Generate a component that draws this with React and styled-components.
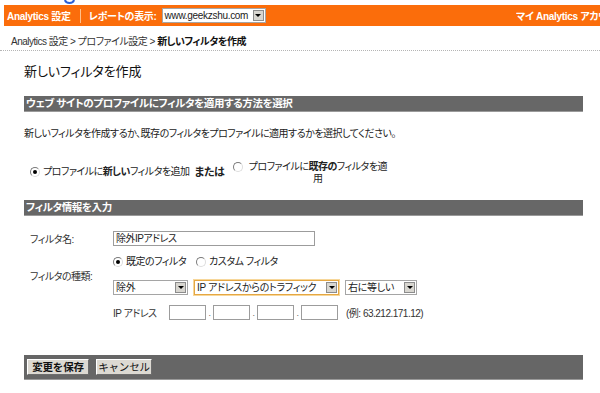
import React from 'react'
import styled, { createGlobalStyle } from 'styled-components'

const GlobalStyle = createGlobalStyle`
  html, body {
    margin: 0;
    padding: 0;
    background: #fff;
  }
  body {
    font-family: "Liberation Sans", "Noto Sans CJK JP", sans-serif;
    font-size: 10px;
    letter-spacing: -0.5px;
    color: #222;
    font-feature-settings: "palt";
  }
`

const Page = styled.div`
  width: 600px;
  height: 393px;
  overflow: hidden;
`

const LogoStrip = styled.div`
  height: 5px;
  padding-left: 63px;
  overflow: hidden;
  svg { display: block; }
`

const TopBar = styled.div`
  height: 21px;
  margin-left: 4px;
  background: #fb6d0b;
  display: flex;
  align-items: center;
  padding-left: 3px;
  overflow: hidden;
  color: #fff;
  font-weight: bold;
  font-size: 10px;
  letter-spacing: -0.3px;
  white-space: nowrap;
`

const Sep = styled.span`
  width: 1px;
  height: 14px;
  background: #ffc08c;
  margin: 0 8px 0 9px;
`

const RightLink = styled.span`
  margin-left: auto;
  width: 84px;
  overflow: hidden;
  white-space: nowrap;
`

const Select = styled.div`
  display: flex;
  align-items: center;
  height: 15px;
  width: ${p => p.$w}px;
  box-sizing: border-box;
  background: #fff;
  border: 1px solid ${p => (p.$focus ? '#e5a743' : '#a5a5a5')};
  box-shadow: ${p => (p.$focus ? '0 0 0 1px #f7d79a' : 'none')};
  margin-left: ${p => p.$ml || 0}px;
  color: #222;
  font-weight: normal;
  font-size: 10px;
  letter-spacing: -0.3px;
  flex-shrink: 0;
`

const SelectText = styled.span`
  flex: 1;
  padding-left: 2px;
  line-height: 13px;
  overflow: hidden;
  white-space: nowrap;
`

const Arrow = styled.span`
  width: 11px;
  height: 11px;
  margin-right: 1px;
  background: #d8d6d0;
  border: 1px solid #8c8c8c;
  box-sizing: border-box;
  display: flex;
  align-items: center;
  justify-content: center;
  flex-shrink: 0;
  &::after {
    content: '';
    border-left: 3px solid transparent;
    border-right: 3px solid transparent;
    border-top: 3px solid #000;
  }
`

const Crumbs = styled.div`
  height: 25px;
  box-sizing: border-box;
  padding: 10px 0 0 11px;
  line-height: 12px;
  color: #333;
  border-bottom: 1px dotted #b5b5b5;
  b { color: #111; }
`

const Content = styled.div`
  padding: 0 17px 0 24px;
`

const Title = styled.h1`
  margin: 13px 0 0;
  font-size: 13px;
  letter-spacing: -0.1px;
  line-height: 16px;
  font-weight: normal;
  color: #111;
`

const SectionBar = styled.div`
  margin-top: ${p => p.$mt}px;
  height: 16px;
  background: #676767;
  border-bottom: 1px solid #9a9a9a;
  box-sizing: border-box;
  color: #fff;
  font-weight: bold;
  font-size: 10.5px;
  letter-spacing: -0.4px;
  line-height: 15px;
  padding-left: 2px;
`

const Para = styled.p`
  margin: 16px 0 0;
  line-height: 12px;
`

const ChoiceRow = styled.div`
  margin-top: 26px;
  display: flex;
  align-items: flex-start;
  padding-left: 6px;
  line-height: 12px;
`

const Option = styled.label`
  display: flex;
  align-items: flex-start;
  gap: 3px;
  line-height: 12px;
  margin-top: ${p => p.$mt || 0}px;
  b { font-weight: bold; }
`

const WrapText = styled.span`
  width: ${p => p.$w}px;
  text-align: center;
`

const Or = styled.span`
  font-weight: bold;
  font-size: 11px;
  margin: 0 9px 0 5px;
`

const Radio = styled.span`
  width: 10px;
  height: 10px;
  margin-top: 1px;
  flex-shrink: 0;
  border-radius: 50%;
  box-sizing: border-box;
  border: 1px solid #7a7a7a;
  border-right-color: #ddd;
  border-bottom-color: #ddd;
  background: #fff;
  display: flex;
  align-items: center;
  justify-content: center;
  &::after {
    content: '';
    width: 4px;
    height: 4px;
    border-radius: 50%;
    background: ${p => (p.$on ? '#000' : 'transparent')};
  }
`

const Form = styled.div`
  margin-top: 15px;
  display: grid;
  grid-template-columns: 83px 1fr;
  padding-left: 6px;
  row-gap: 10px;
`

const Label = styled.div`
  display: flex;
  align-items: center;
  color: #333;
`

const Controls = styled.div`
  display: flex;
  flex-direction: column;
  gap: ${p => p.$gap || 0}px;
`

const Row = styled.div`
  display: flex;
  align-items: center;
  gap: ${p => p.$gap || 0}px;
`

const TextInput = styled.div`
  width: ${p => p.$w}px;
  height: 15px;
  box-sizing: border-box;
  border: 1px solid #9c9c9c;
  padding-left: 2px;
  line-height: 13px;
  background: #fff;
`

const IpLabel = styled.span`
  width: 56px;
  color: #333;
`

const Dot = styled.span`
  width: 7px;
  text-align: center;
  font-size: 9px;
  color: #666;
`

const Hint = styled.span`
  margin-left: 8px;
  color: #333;
`

const ButtonBar = styled.div`
  margin-top: 35px;
  height: 25px;
  background: #666;
  border-bottom: 1px solid #9a9a9a;
  box-sizing: border-box;
  display: flex;
  align-items: center;
  padding-left: 3px;
  gap: 7px;
`

const Button = styled.button`
  height: 16px;
  width: ${p => p.$w}px;
  padding: 0;
  font-family: inherit;
  font-size: 10.5px;
  letter-spacing: -0.2px;
  white-space: nowrap;
  font-weight: ${p => (p.$primary ? 'bold' : 'normal')};
  color: #111;
  background: #dcd9d2;
  border: 1px solid;
  border-color: #fff #6d6d6d #6d6d6d #fff;
  line-height: 14px;
`

export default function App() {
  return (
    <Page>
      <GlobalStyle />
      <LogoStrip>
        <svg width="14" height="5" viewBox="0 0 14 5">
          <path d="M2 0 C3 4 10 4 11 0" stroke="#2a5fd6" strokeWidth="2" fill="none" />
        </svg>
      </LogoStrip>
      <TopBar>
        <span>Analytics 設定</span>
        <Sep />
        <span>レポートの表示:</span>
        <Select $w={104} $ml={5}>
          <SelectText>www.geekzshu.com</SelectText>
          <Arrow />
        </Select>
        <RightLink>マイ Analytics アカウント</RightLink>
      </TopBar>
      <Crumbs>
        Analytics 設定 &gt; プロファイル設定 &gt; <b>新しいフィルタを作成</b>
      </Crumbs>
      <Content>
        <Title>新しいフィルタを作成</Title>
        <SectionBar $mt={16}>ウェブ サイトのプロファイルにフィルタを適用する方法を選択</SectionBar>
        <Para>新しいフィルタを作成するか、既存のフィルタをプロファイルに適用するかを選択してください。</Para>
        <ChoiceRow>
          <Option>
            <Radio $on />
            <span>プロファイルに<b>新しい</b>フィルタを追加</span>
          </Option>
          <Or>または</Or>
          <Option $mt={-5}>
            <Radio />
            <WrapText $w={143}>プロファイルに<b>既存の</b>フィルタを適用</WrapText>
          </Option>
        </ChoiceRow>
        <SectionBar $mt={15}>フィルタ情報を入力</SectionBar>
        <Form>
          <Label>フィルタ名:</Label>
          <TextInput $w={202}>除外IPアドレス</TextInput>
          <Label>フィルタの種類:</Label>
          <Controls $gap={12}>
            <Row $gap={10}>
              <Option>
                <Radio $on />
                <span>既定のフィルタ</span>
              </Option>
              <Option>
                <Radio />
                <span>カスタム フィルタ</span>
              </Option>
            </Row>
            <Row $gap={6}>
              <Select $w={75}>
                <SelectText>除外</SelectText>
                <Arrow />
              </Select>
              <Select $w={145} $focus>
                <SelectText>IP アドレスからのトラフィック</SelectText>
                <Arrow />
              </Select>
              <Select $w={72}>
                <SelectText>右に等しい</SelectText>
                <Arrow />
              </Select>
            </Row>
          </Controls>
          <span />
          <Row>
            <IpLabel>IP アドレス</IpLabel>
            <TextInput $w={37} />
            <Dot>.</Dot>
            <TextInput $w={37} />
            <Dot>.</Dot>
            <TextInput $w={37} />
            <Dot>.</Dot>
            <TextInput $w={37} />
            <Hint>(例: 63.212.171.12)</Hint>
          </Row>
        </Form>
        <ButtonBar>
          <Button $primary $w={62}>変更を保存</Button>
          <Button $w={56}>キャンセル</Button>
        </ButtonBar>
      </Content>
    </Page>
  )
}
